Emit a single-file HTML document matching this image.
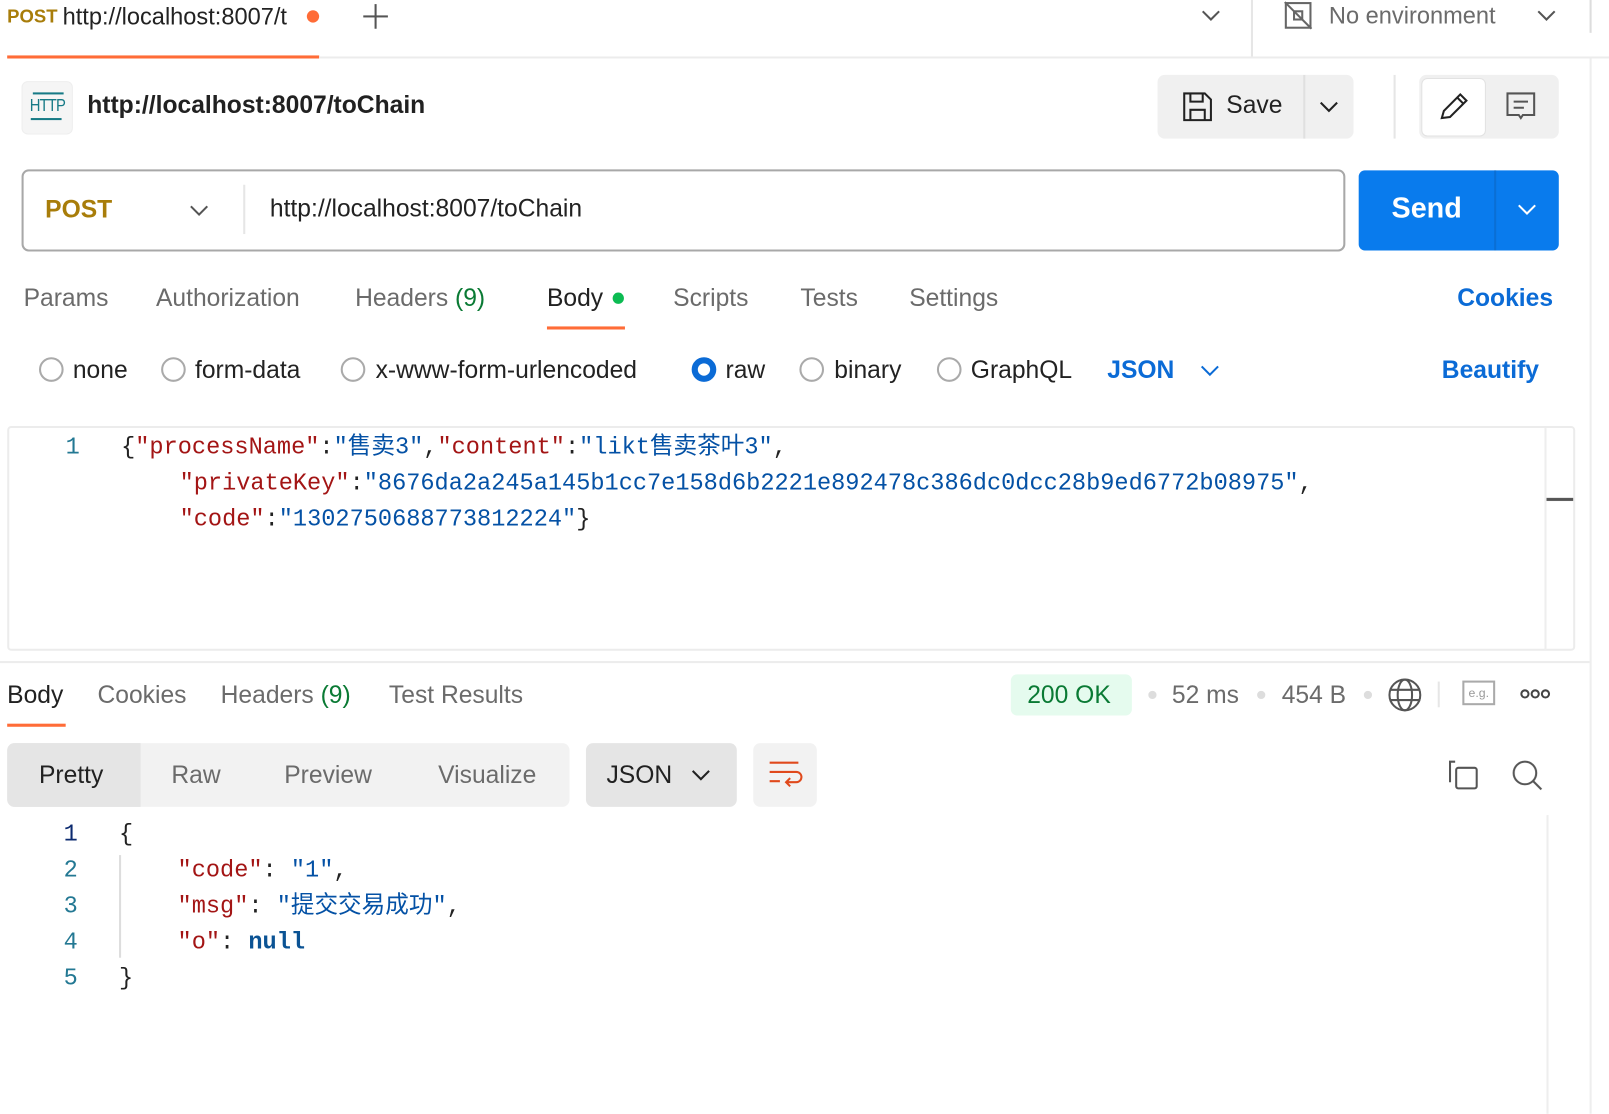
<!DOCTYPE html>
<html><head><meta charset="utf-8"><style>
*{margin:0;padding:0;box-sizing:border-box}
html,body{width:1609px;height:1085px;overflow:hidden;background:#fff}
#w{position:absolute;left:0;top:0;width:1568px;height:1057px;transform:scale(1.0262,1.0265);transform-origin:0 0;font-family:"Liberation Sans","Noto Sans CJK SC",sans-serif;color:#212121}
.a{position:absolute;white-space:nowrap}
.t{font-size:24px;color:#6b6b6b}
.m{font-family:"Liberation Mono","Noto Sans CJK SC",monospace;font-size:23px;line-height:28px;height:28px}
.k{color:#a31515}.s{color:#0451a5}.p{color:#222}.n{color:#0b5394;font-weight:bold}
.ln{color:#237893}
.r{position:absolute;width:24px;height:24px;border:2px solid #aaa;border-radius:50%}
</style></head><body><div id="w">
<!-- top tab bar -->
<div class="a" style="left:7px;top:6px;font-size:18px;font-weight:bold;color:#a87d0a">POST</div>
<div class="a" style="left:61px;top:3px;font-size:23px;color:#222">http://localhost:8007/t</div>
<div class="a" style="left:299px;top:10px;width:12px;height:12px;border-radius:50%;background:#ff6c37"></div>
<div class="a" style="left:354px;top:15px;width:24px;height:2px;background:#555"></div>
<div class="a" style="left:365px;top:4px;width:2px;height:24px;background:#555"></div>
<div class="a" style="left:7px;top:54px;width:304px;height:3px;background:#ff6c37"></div>
<div class="a" style="left:311px;top:55px;width:1298px;height:2px;background:#ececec"></div>
<svg class="a" style="left:1170px;top:8px" width="20" height="14"><path d="M2 3l8 8 8-8" fill="none" stroke="#555" stroke-width="2"/></svg>
<div class="a" style="left:1219px;top:0;width:2px;height:55px;background:#e6e6e6"></div>
<svg class="a" style="left:1250px;top:0" width="30" height="30"><rect x="3" y="3" width="24" height="24" fill="none" stroke="#666" stroke-width="2"/><path d="M2 2l26 26" stroke="#666" stroke-width="2"/><rect x="11" y="11" width="8" height="8" fill="none" stroke="#666" stroke-width="2"/></svg>
<div class="a" style="left:1295px;top:2px;font-size:23px;color:#6b6b6b">No environment</div>
<svg class="a" style="left:1497px;top:8px" width="20" height="14"><path d="M2 3l8 8 8-8" fill="none" stroke="#555" stroke-width="2"/></svg>
<div class="a" style="left:1549px;top:0;width:2px;height:32px;background:#ddd"></div>
<div class="a" style="left:1549px;top:57px;width:2px;height:1028px;background:#eee"></div>
<!-- title row -->
<div class="a" style="left:21px;top:79px;width:50px;height:52px;background:#f5f5f5;border:1px solid #eee;border-radius:6px"></div>
<div class="a" style="left:29px;top:93px;font-size:17px;color:#167a86;letter-spacing:-1px;transform:scaleX(.85);transform-origin:left">HTTP</div>
<div class="a" style="left:32px;top:90px;width:30px;height:2px;background:#167a86"></div>
<div class="a" style="left:30px;top:115px;width:30px;height:2px;background:#167a86"></div>
<div class="a" style="left:85px;top:89px;font-size:24px;font-weight:bold;color:#212121">http://localhost:8007/toChain</div>
<div class="a" style="left:1128px;top:73px;width:191px;height:62px;background:#f0f0f0;border-radius:7px"></div>
<div class="a" style="left:1270px;top:73px;width:2px;height:62px;background:#e0e0e0"></div>
<svg class="a" style="left:1152px;top:89px" width="30" height="30"><path d="M2 2h20l6 6v20H2z M8 2v8h12V2 M8 28v-10h14v10" fill="none" stroke="#222" stroke-width="2"/></svg>
<div class="a" style="left:1195px;top:89px;font-size:24px;color:#222">Save</div>
<svg class="a" style="left:1285px;top:97px" width="20" height="14"><path d="M2 3l8 8 8-8" fill="none" stroke="#222" stroke-width="2"/></svg>
<div class="a" style="left:1358px;top:73px;width:2px;height:62px;background:#e6e6e6"></div>
<div class="a" style="left:1383px;top:73px;width:136px;height:62px;background:#f0f0f0;border-radius:7px"></div>
<div class="a" style="left:1385px;top:76px;width:63px;height:57px;background:#fff;border:1px solid #e2e2e2;border-radius:6px"></div>
<svg class="a" style="left:1401px;top:89px" width="32" height="30"><path d="M4 26l2-7L22 3l6 6L12 25z M19 6l6 6" fill="none" stroke="#222" stroke-width="2"/></svg>
<svg class="a" style="left:1467px;top:89px" width="30" height="30"><path d="M2 2h26v21H17l-2 3-2-3H2z M8 10h14 M8 16h10" fill="none" stroke="#555" stroke-width="2"/></svg>
<!-- URL bar -->
<div class="a" style="left:21px;top:165px;width:1290px;height:80px;border:2px solid #a8a8a8;border-radius:7px"></div>
<div class="a" style="left:237px;top:180px;width:2px;height:48px;background:#e6e6e6"></div>
<div class="a" style="left:44px;top:191px;font-size:24px;font-weight:bold;color:#a87d0a">POST</div>
<svg class="a" style="left:184px;top:198px" width="20" height="14"><path d="M2 3l8 8 8-8" fill="none" stroke="#555" stroke-width="2"/></svg>
<div class="a" style="left:263px;top:190px;font-size:24px;color:#222">http://localhost:8007/toChain</div>
<div class="a" style="left:1324px;top:166px;width:195px;height:78px;background:#097bed;border-radius:6px"></div>
<div class="a" style="left:1456px;top:166px;width:2px;height:78px;background:#0a6fd4"></div>
<div class="a" style="left:1356px;top:187px;font-size:28px;font-weight:bold;color:#fff">Send</div>
<svg class="a" style="left:1478px;top:197px" width="20" height="14"><path d="M2 3l8 8 8-8" fill="none" stroke="#fff" stroke-width="2"/></svg>
<!-- request tabs -->
<div class="a t" style="left:23px;top:277px">Params</div>
<div class="a t" style="left:152px;top:277px">Authorization</div>
<div class="a t" style="left:346px;top:277px">Headers <span style="color:#0a7a34">(9)</span></div>
<div class="a t" style="left:533px;top:277px;color:#212121">Body</div>
<div class="a" style="left:597px;top:285px;width:11px;height:11px;border-radius:50%;background:#0cbb52"></div>
<div class="a" style="left:533px;top:318px;width:76px;height:3px;background:#ff6c37"></div>
<div class="a t" style="left:656px;top:277px">Scripts</div>
<div class="a t" style="left:780px;top:277px">Tests</div>
<div class="a t" style="left:886px;top:277px">Settings</div>
<div class="a" style="left:1420px;top:277px;font-size:24px;font-weight:bold;color:#0b6bd6">Cookies</div>
<!-- body types -->
<div class="r" style="left:38px;top:348px"></div><div class="a t" style="left:71px;top:347px;color:#222">none</div>
<div class="r" style="left:157px;top:348px"></div><div class="a t" style="left:190px;top:347px;color:#222">form-data</div>
<div class="r" style="left:332px;top:348px"></div><div class="a t" style="left:366px;top:347px;color:#222">x-www-form-urlencoded</div>
<div class="r" style="left:674px;top:348px;border:6px solid #0b6bd6"></div><div class="a t" style="left:707px;top:347px;color:#222">raw</div>
<div class="r" style="left:779px;top:348px"></div><div class="a t" style="left:813px;top:347px;color:#222">binary</div>
<div class="r" style="left:913px;top:348px"></div><div class="a t" style="left:946px;top:347px;color:#222">GraphQL</div>
<div class="a" style="left:1079px;top:347px;font-size:24px;font-weight:bold;color:#0b6bd6">JSON</div>
<svg class="a" style="left:1169px;top:354px" width="20" height="14"><path d="M2 3l8 8 8-8" fill="none" stroke="#0b6bd6" stroke-width="2"/></svg>
<div class="a" style="left:1405px;top:347px;font-size:24px;font-weight:bold;color:#0b6bd6">Beautify</div>
<!-- editor -->
<div class="a" style="left:7px;top:415px;width:1528px;height:219px;border:2px solid #ececec;border-radius:4px"></div>
<div class="a" style="left:1505px;top:417px;width:2px;height:216px;background:#eee"></div>
<div class="a" style="left:1507px;top:485px;width:26px;height:3px;background:#555"></div>
<div class="a m ln" style="left:64px;top:422px">1</div>
<div class="a m" style="left:118px;top:422px"><span class="p">{</span><span class="k">"processName"</span><span class="p">:</span><span class="s">"售卖3"</span><span class="p">,</span><span class="k">"content"</span><span class="p">:</span><span class="s">"likt售卖茶叶3"</span><span class="p">,</span></div>
<div class="a m" style="left:175px;top:457px"><span class="k">"privateKey"</span><span class="p">:</span><span class="s">"8676da2a245a145b1cc7e158d6b2221e892478c386dc0dcc28b9ed6772b08975"</span><span class="p">,</span></div>
<div class="a m" style="left:175px;top:492px"><span class="k">"code"</span><span class="p">:</span><span class="s">"1302750688773812224"</span><span class="p">}</span></div>
<div class="a" style="left:0;top:644px;width:1549px;height:2px;background:#ececec"></div>
<!-- response tabs -->
<div class="a t" style="left:7px;top:664px;color:#212121">Body</div>
<div class="a" style="left:7px;top:705px;width:57px;height:3px;background:#ff6c37"></div>
<div class="a t" style="left:95px;top:664px">Cookies</div>
<div class="a t" style="left:215px;top:664px">Headers <span style="color:#0a7a34">(9)</span></div>
<div class="a t" style="left:379px;top:664px">Test Results</div>
<div class="a" style="left:985px;top:657px;width:118px;height:40px;background:#e5fbee;border-radius:6px"></div>
<div class="a" style="left:1001px;top:664px;font-size:24px;color:#0a7a34">200 OK</div>
<div class="a" style="left:1119px;top:673px;width:8px;height:8px;border-radius:50%;background:#ddd"></div>
<div class="a t" style="left:1142px;top:664px">52 ms</div>
<div class="a" style="left:1225px;top:673px;width:8px;height:8px;border-radius:50%;background:#ddd"></div>
<div class="a t" style="left:1249px;top:664px">454 B</div>
<div class="a" style="left:1329px;top:673px;width:8px;height:8px;border-radius:50%;background:#ddd"></div>
<svg class="a" style="left:1352px;top:660px" width="34" height="34"><circle cx="17" cy="17" r="15" fill="none" stroke="#555" stroke-width="2"/><ellipse cx="17" cy="17" rx="7" ry="15" fill="none" stroke="#555" stroke-width="2"/><path d="M2 12h30M2 22h30" stroke="#555" stroke-width="2"/></svg>
<div class="a" style="left:1401px;top:664px;width:2px;height:25px;background:#e6e6e6"></div>
<div class="a" style="left:1425px;top:663px;width:32px;height:24px;border:2px solid #aaa;font-size:12px;color:#999;text-align:center;line-height:20px">e.g.</div>
<svg class="a" style="left:1481px;top:670px" width="30" height="12"><circle cx="5" cy="6" r="3.5" fill="none" stroke="#444" stroke-width="2"/><circle cx="15" cy="6" r="3.5" fill="none" stroke="#444" stroke-width="2"/><circle cx="25" cy="6" r="3.5" fill="none" stroke="#444" stroke-width="2"/></svg>
<!-- response toolbar -->
<div class="a" style="left:7px;top:724px;width:548px;height:62px;background:#f2f2f2;border-radius:7px"></div>
<div class="a" style="left:7px;top:724px;width:130px;height:62px;background:#e5e5e5;border-radius:7px 0 0 7px"></div>
<div class="a t" style="left:38px;top:742px;color:#212121">Pretty</div>
<div class="a t" style="left:167px;top:742px">Raw</div>
<div class="a t" style="left:277px;top:742px">Preview</div>
<div class="a t" style="left:427px;top:742px">Visualize</div>
<div class="a" style="left:571px;top:724px;width:147px;height:62px;background:#e5e5e5;border-radius:7px"></div>
<div class="a t" style="left:591px;top:742px;color:#212121">JSON</div>
<svg class="a" style="left:673px;top:748px" width="20" height="14"><path d="M2 3l8 8 8-8" fill="none" stroke="#222" stroke-width="2"/></svg>
<div class="a" style="left:734px;top:724px;width:62px;height:62px;background:#f2f2f2;border-radius:7px"></div>
<svg class="a" style="left:748px;top:740px" width="34" height="30"><path d="M2 3h28M2 12h26a5 5 0 0 1 0 10h-9M22 18l-4 4 4 4M2 21h10" fill="none" stroke="#e0491c" stroke-width="2"/></svg>
<svg class="a" style="left:1410px;top:739px" width="32" height="32"><path d="M8 3H3v20" fill="none" stroke="#555" stroke-width="2"/><rect x="9" y="9" width="20" height="20" rx="2" fill="none" stroke="#555" stroke-width="2"/></svg>
<svg class="a" style="left:1472px;top:739px" width="32" height="32"><circle cx="14" cy="14" r="11" fill="none" stroke="#555" stroke-width="2"/><path d="M22 22l8 8" stroke="#555" stroke-width="2"/></svg>
<div class="a" style="left:1507px;top:794px;width:2px;height:291px;background:#eee"></div>
<!-- response code -->
<div class="a" style="left:116px;top:833px;width:2px;height:100px;background:#ddd"></div>
<div class="a m" style="left:62px;top:799px;color:#0b2a6f">1</div>
<div class="a m ln" style="left:62px;top:834px">2</div>
<div class="a m ln" style="left:62px;top:869px">3</div>
<div class="a m ln" style="left:62px;top:904px">4</div>
<div class="a m ln" style="left:62px;top:939px">5</div>
<div class="a m p" style="left:116px;top:799px">{</div>
<div class="a m" style="left:173px;top:834px"><span class="k">"code"</span><span class="p">: </span><span class="s">"1"</span><span class="p">,</span></div>
<div class="a m" style="left:173px;top:869px"><span class="k">"msg"</span><span class="p">: </span><span class="s">"提交交易成功"</span><span class="p">,</span></div>
<div class="a m" style="left:173px;top:904px"><span class="k">"o"</span><span class="p">: </span><span class="n">null</span></div>
<div class="a m p" style="left:116px;top:939px">}</div>
</div></body></html>
